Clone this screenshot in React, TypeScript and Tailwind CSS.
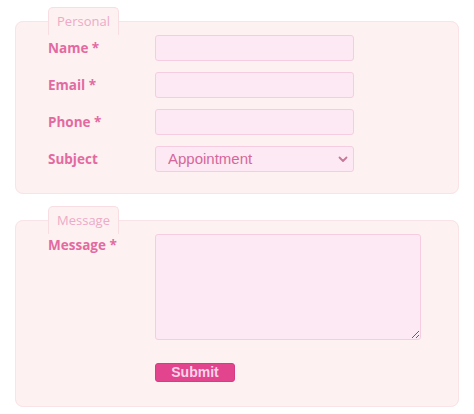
import React from 'react';

const labelCls = "w-[107px] shrink-0 text-[13.5px] font-bold text-[#e36aa1]";
const inputCls =
  "h-[26px] w-[199px] rounded-[3px] border border-[#f6cde0] bg-[#fde9f3] px-2 text-[14px] text-[#d5679a] outline-none";

function Legend({children}: {children: React.ReactNode}) {
  return (
    <legend className="h-[28px] w-[71px] rounded-t-[5px] border border-b-0 border-[#f8dde3] bg-[#fdf1f2] text-[13px] leading-[26px] text-[#eeaac6]">
      <div className="text-center">{children}</div>
    </legend>
  );
}

function Row({label, children}: {label: string; children: React.ReactNode}) {
  return (
    <div className="flex items-center">
      <label className={labelCls}>{label}</label>
      {children}
    </div>
  );
}

export default function App() {
  return (
    <div className="flex w-[474px] flex-col gap-[12px] pl-[15px] pt-[7px] font-['Open_Sans',sans-serif]">
      <fieldset className="m-0 w-[444px] rounded-[8px] border border-[#f9e3e6] bg-[#fdf1f1] pb-[21px] pl-[32px] pr-0 pt-0">
        <Legend>Personal</Legend>
        <div className="flex flex-col gap-[11px]">
          <Row label="Name *">
            <input className={inputCls} />
          </Row>
          <Row label="Email *">
            <input className={inputCls} />
          </Row>
          <Row label="Phone *">
            <input className={inputCls} />
          </Row>
          <Row label="Subject">
            <div className="relative">
              <select
                defaultValue="Appointment"
                className={inputCls + " appearance-none pl-[12px] font-['Liberation_Sans',Arial,sans-serif] text-[15px]"}
              >
                <option>Appointment</option>
                <option>Question</option>
                <option>Other</option>
              </select>
              <svg
                className="pointer-events-none absolute right-[6px] top-[9px]"
                width="10"
                height="8"
                viewBox="0 0 10 8"
                fill="none"
                stroke="#c7779a"
                strokeWidth="1.8"
                strokeLinecap="round"
                strokeLinejoin="round"
              >
                <path d="M1.5 2.5 5 6 8.5 2.5" />
              </svg>
            </div>
          </Row>
        </div>
      </fieldset>

      <fieldset className="m-0 w-[444px] rounded-[8px] border border-[#f9e3e6] bg-[#fdf1f1] pb-[24px] pl-[32px] pr-0 pt-0">
        <Legend>Message</Legend>
        <div className="flex items-start">
          <label className={labelCls + " mt-[1px]"}>Message *</label>
          <div className="flex flex-col gap-[23px]">
            <textarea className="block h-[106px] w-[266px] rounded-[3px] border border-[#f6cde0] bg-[#fde9f3] p-1 text-[14px] text-[#d5679a] outline-none" />
            <button className="h-[19px] w-[80px] rounded-[3px] border border-[#d53d80] bg-[#e2448e] font-['Liberation_Sans',Arial,sans-serif] text-[14px] font-bold leading-[17px] text-[#fbd3e6]">
              Submit
            </button>
          </div>
        </div>
      </fieldset>
    </div>
  );
}
